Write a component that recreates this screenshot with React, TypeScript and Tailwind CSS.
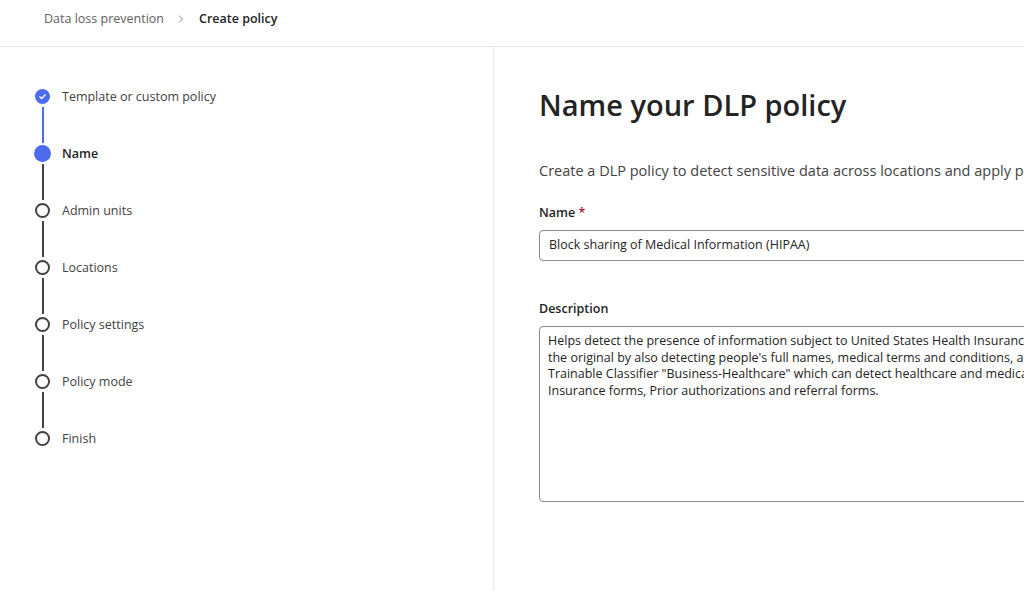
const steps = [
  { label: "Template or custom policy", state: "done" },
  { label: "Name", state: "current" },
  { label: "Admin units", state: "todo" },
  { label: "Locations", state: "todo" },
  { label: "Policy settings", state: "todo" },
  { label: "Policy mode", state: "todo" },
  { label: "Finish", state: "todo" },
];

const StepDot = ({ state }: { state: string }) => {
  if (state === "done") {
    return (
      <span className="flex h-[15px] w-[15px] shrink-0 items-center justify-center rounded-full bg-[#4f6bed]">
        <svg width="9" height="9" viewBox="0 0 10 10" fill="none">
          <path d="M2 5.2 4.1 7.2 8 3" stroke="white" strokeWidth="1.4" strokeLinecap="round" strokeLinejoin="round" />
        </svg>
      </span>
    );
  }
  if (state === "current") {
    return <span className="block h-[17px] w-[17px] shrink-0 rounded-full bg-[#4f6bed]" />;
  }
  return <span className="block h-[15px] w-[15px] shrink-0 rounded-full border-2 border-[#424242] bg-white" />;
};

export default function App() {
  return (
    <div className="flex h-[591px] w-[1024px] flex-col overflow-hidden bg-white font-['Open_Sans',sans-serif] text-[#242424]">
      {/* Breadcrumb */}
      <div className="flex h-[47px] shrink-0 items-start gap-[13px] border-b border-[#e8e8e8] pl-[44px] pt-[10px] text-[12.5px] leading-[17px]">
        <span className="text-[#616161]">Data loss prevention</span>
        <span className="pt-[4px]">
          <svg width="8" height="10" viewBox="0 0 8 10" fill="none">
            <path d="M2 1.5 5.5 5 2 8.5" stroke="#8a8a8a" strokeWidth="1" />
          </svg>
        </span>
        <span className="pl-[1px] font-semibold">Create policy</span>
      </div>

      <div className="flex flex-1">
        {/* Stepper */}
        <div className="w-[494px] shrink-0 border-r border-[#ebebeb] pl-[34px] pt-[42px]">
          {steps.map((s, i) => (
            <div key={s.label} className="flex">
              <div className="flex w-[17px] flex-col items-center">
                <div className="flex h-[15px] w-[17px] items-center justify-center">
                  <StepDot state={s.state} />
                </div>
                {i < steps.length - 1 && (
                  <span
                    className={
                      s.state === "done"
                        ? "my-[3px] block h-[36px] w-[2px] bg-[#4f6bed]"
                        : "my-[3px] block h-[36px] w-[2px] bg-[#424242]"
                    }
                  />
                )}
              </div>
              <span
                className={
                  s.state === "current"
                    ? "ml-[11px] text-[12.5px] font-semibold leading-[16px]"
                    : "ml-[11px] text-[12.5px] leading-[16px] text-[#424242]"
                }
              >
                {s.label}
              </span>
            </div>
          ))}
        </div>

        {/* Form */}
        <div className="min-w-0 flex-1 pl-[45px] pt-[38px]">
          <h1 className="whitespace-nowrap text-[29px] font-semibold leading-[40px]">Name your DLP policy</h1>
          <p className="mt-[36px] whitespace-nowrap text-[14.5px] leading-[20px] text-[#424242]">
            Create a DLP policy to detect sensitive data across locations and apply protection actions when the conditions are met.
          </p>

          <label className="mt-[24px] block text-[12.5px] font-semibold leading-[16px]">
            Name <span className="text-[#a4262c]">*</span>
          </label>
          <div className="mt-[9px] flex h-[31px] w-[600px] items-center rounded-[4px] border border-[#8a8a8a] pl-[9px] text-[12.5px]">
            Block sharing of Medical Information (HIPAA)
          </div>

          <label className="mt-[40px] block text-[12.5px] font-semibold leading-[16px]">Description</label>
          <div className="mt-[9px] h-[176px] w-[600px] rounded-[4px] border border-[#8a8a8a] px-[8px] pt-[6px] text-[12.5px] leading-[16.5px]">
            <p className="whitespace-nowrap">
              Helps detect the presence of information subject to United States Health Insurance Portability and Accountability Act (HIPAA). It extends
              <br />
              the original by also detecting people's full names, medical terms and conditions, and it now uses the
              <br />
              Trainable Classifier "Business-Healthcare" which can detect healthcare and medical documents, such as
              <br />
              Insurance forms, Prior authorizations and referral forms.
            </p>
          </div>
        </div>
      </div>
    </div>
  );
}
